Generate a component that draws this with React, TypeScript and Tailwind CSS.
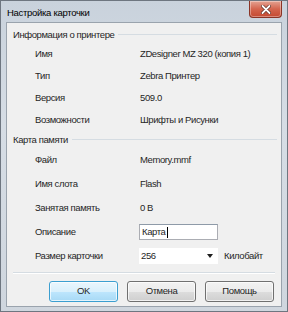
import { useState } from 'react';

const font = { fontFamily: '"Liberation Sans", Arial, sans-serif' };

type Row = { label: string; value?: string };

const printerRows: Row[] = [
  { label: 'Имя', value: 'ZDesigner MZ 320 (копия 1)' },
  { label: 'Тип', value: 'Zebra Принтер' },
  { label: 'Версия', value: '509.0' },
  { label: 'Возможности', value: 'Шрифты и Рисунки' },
];

const cardRows: Row[] = [
  { label: 'Файл', value: 'Memory.mmf' },
  { label: 'Имя слота', value: 'Flash' },
  { label: 'Занятая память', value: '0 B' },
];

function GroupHeader({ title }: { title: string }) {
  return (
    <div className="flex h-[16px] items-center gap-[4px] pl-[6px] pr-[4px]">
      <span className="whitespace-nowrap">{title}</span>
      <div className="h-[2px] flex-1 border-t border-[#d5dce2] border-b-white" />
    </div>
  );
}

function InfoRow({ row, height, children }: { row: Row; height: string; children?: React.ReactNode }) {
  return (
    <div className={`flex items-center pl-[28px] ${height}`}>
      <span className="w-[105px] shrink-0 whitespace-nowrap">{row.label}</span>
      {children ?? <span className="whitespace-nowrap">{row.value}</span>}
    </div>
  );
}

export default function App() {
  const [desc, setDesc] = useState('Карта');

  return (
    <div
      className="relative flex h-[312px] w-[288px] flex-col overflow-hidden border border-[#6e7680] bg-[linear-gradient(180deg,#c9d2dc_0%,#d6dde5_40%,#cfd6de_100%)] text-[9.5px] tracking-[-0.4px] text-[#262626]"
      style={font}
    >
      {/* title bar */}
      <div className="flex h-[21px] shrink-0 items-start justify-between pl-[6px] pr-[5px]">
        <span className="mt-[5px] text-[9.5px] tracking-[-0.3px] text-black">Настройка карточки</span>
        <button className="flex h-[17px] w-[33px] items-center justify-center rounded-b-[4px] border border-t-0 border-[#8a3426] bg-[linear-gradient(180deg,#e4a392_0%,#d4654e_50%,#c44a32_100%)] shadow-[inset_0_0_0_1px_rgba(255,255,255,0.35)]">
          <svg width="10" height="9" viewBox="0 0 10 9">
            <path d="M1.5 1 L8.5 8 M8.5 1 L1.5 8" stroke="#5a2a20" strokeWidth="3.2" strokeLinecap="round" />
            <path d="M1.5 1 L8.5 8 M8.5 1 L1.5 8" stroke="#ffffff" strokeWidth="1.8" strokeLinecap="round" />
          </svg>
        </button>
      </div>

      {/* client area */}
      <div className="mx-[5px] mb-[4px] flex flex-1 flex-col border border-[#9aa3ad] bg-[#f0f0f0]">
        <div className="mt-[4px]">
          <GroupHeader title="Информация о принтере" />
        </div>
        {printerRows.map((r) => (
          <InfoRow key={r.label} row={r} height="h-[22px]" />
        ))}

        <div className="mt-[1px]">
          <GroupHeader title="Карта памяти" />
        </div>
        {cardRows.map((r) => (
          <InfoRow key={r.label} row={r} height="h-[24px]" />
        ))}
        <InfoRow row={{ label: 'Описание' }} height="h-[24px]">
          <div className="-ml-[1px] flex h-[16px] w-[79px] items-center border border-[#abadb3] border-t-[#8e9aa8] bg-white pl-[2px]">
            <input
              value={desc}
              onChange={(e) => setDesc(e.target.value)}
              className="w-[25px] bg-transparent text-[9.5px] tracking-[-0.4px] outline-none"
              style={font}
            />
            <span className="h-[11px] w-px bg-black" />
          </div>
        </InfoRow>
        <InfoRow row={{ label: 'Размер карточки' }} height="h-[24px]">
          <div className="-ml-[1px] flex h-[16px] w-[79px] items-center justify-between bg-white pl-[2px] pr-[5px]">
            <span>256</span>
            <svg width="6" height="4" viewBox="0 0 6 4">
              <path d="M0 0 H6 L3 4 Z" fill="#1e1e1e" />
            </svg>
          </div>
          <span className="ml-[6px] whitespace-nowrap">Килобайт</span>
        </InfoRow>

        <div className="mx-[6px] mt-[4px] h-[2px] border-t border-[#d5dce2] border-b border-b-white" />

        <div className="mt-[7px] flex gap-[9px] pl-[42px]">
          <button className="h-[21px] w-[69px] rounded-[3px] border border-[#3c9fd0] bg-[linear-gradient(180deg,#eaf6fd_0%,#d9f0fc_50%,#bee6fd_51%,#a7d9f5_100%)] shadow-[inset_0_0_0_1px_rgba(255,255,255,0.7)]">
            OK
          </button>
          <button className="h-[21px] w-[69px] rounded-[3px] border border-[#707070] bg-[linear-gradient(180deg,#f2f2f2_0%,#ebebeb_50%,#dddddd_51%,#cfcfcf_100%)] shadow-[inset_0_0_0_1px_rgba(255,255,255,0.7)]">
            Отмена
          </button>
          <button className="h-[21px] w-[69px] rounded-[3px] border border-[#707070] bg-[linear-gradient(180deg,#f2f2f2_0%,#ebebeb_50%,#dddddd_51%,#cfcfcf_100%)] shadow-[inset_0_0_0_1px_rgba(255,255,255,0.7)]">
            Помощь
          </button>
        </div>
      </div>
    </div>
  );
}
